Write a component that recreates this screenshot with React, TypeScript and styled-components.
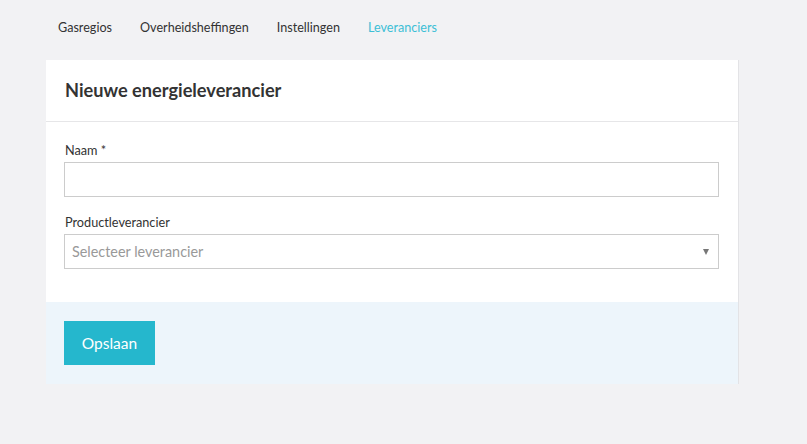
import React from "react";
import styled, { createGlobalStyle } from "styled-components";

const Global = createGlobalStyle`
  html, body { margin: 0; padding: 0; background: #f2f2f4; }
  body { font-family: Lato, "Open Sans", sans-serif; color: #333; }
  * { box-sizing: border-box; }
`;

const Page = styled.div`
  width: 807px;
  height: 444px;
  background: #f2f2f4;
  padding: 0 68px 0 46px;
`;

const Nav = styled.nav`
  display: flex;
  height: 60px;
  align-items: center;
  padding-bottom: 6px;
  margin-left: -2px;
`;

const NavItem = styled.a<{ $active?: boolean }>`
  font-size: 12.6px;
  padding: 0 14px;
  color: ${(p) => (p.$active ? "#3dbfd6" : "#333")};
  text-decoration: none;
  cursor: pointer;
`;

const Card = styled.div`
  width: 693px;
  background: #fff;
  border-right: 1px solid #e3e3e6;
`;

const Header = styled.div`
  height: 62px;
  border-bottom: 1px solid #e6e6e8;
  display: flex;
  align-items: center;
  padding: 0 18px 2px 19px;
`;

const Title = styled.h2`
  margin: 0;
  font-size: 18.2px;
  font-weight: 700;
  color: #333;
`;

const Body = styled.div`
  padding: 19px 19px 33px 18px;
  display: flex;
  flex-direction: column;
  gap: 16px;
`;

const Field = styled.div`
  display: flex;
  flex-direction: column;
  gap: 3px;
`;

const Label = styled.label`
  font-size: 12.7px;
  color: #333;
  line-height: 18px;
  padding-left: 1px;
`;

const Input = styled.input`
  height: 35px;
  width: 100%;
  border: 1px solid #cccccc;
  font-family: inherit;
  font-size: 14px;
  padding: 0 10px;
  outline: none;
  background: #fff;
`;

const SelectBox = styled.div`
  position: relative;
  height: 35px;
  border: 1px solid #cccccc;
  display: flex;
  align-items: center;
  padding: 0 9px 0 7px;
  font-size: 14.4px;
  color: #999;
  background: #fff;
`;

const Caret = styled.span`
  margin-left: auto;
  width: 0;
  height: 0;
  border-left: 3.5px solid transparent;
  border-right: 3.5px solid transparent;
  border-top: 6px solid #777;
`;

const Footer = styled.div`
  height: 82px;
  background: #edf5fb;
  padding: 19px 18px;
`;

const Button = styled.button`
  height: 44px;
  width: 91px;
  background: #25b7cd;
  color: #fff;
  border: none;
  font-family: inherit;
  font-size: 15.5px;
  cursor: pointer;
`;

export default function App() {
  return (
    <Page>
      <Global />
      <Nav>
        <NavItem>Gasregios</NavItem>
        <NavItem>Overheidsheffingen</NavItem>
        <NavItem>Instellingen</NavItem>
        <NavItem $active>Leveranciers</NavItem>
      </Nav>
      <Card>
        <Header>
          <Title>Nieuwe energieleverancier</Title>
        </Header>
        <Body>
          <Field>
            <Label>Naam *</Label>
            <Input />
          </Field>
          <Field>
            <Label>Productleverancier</Label>
            <SelectBox>
              Selecteer leverancier
              <Caret />
            </SelectBox>
          </Field>
        </Body>
        <Footer>
          <Button>Opslaan</Button>
        </Footer>
      </Card>
    </Page>
  );
}
